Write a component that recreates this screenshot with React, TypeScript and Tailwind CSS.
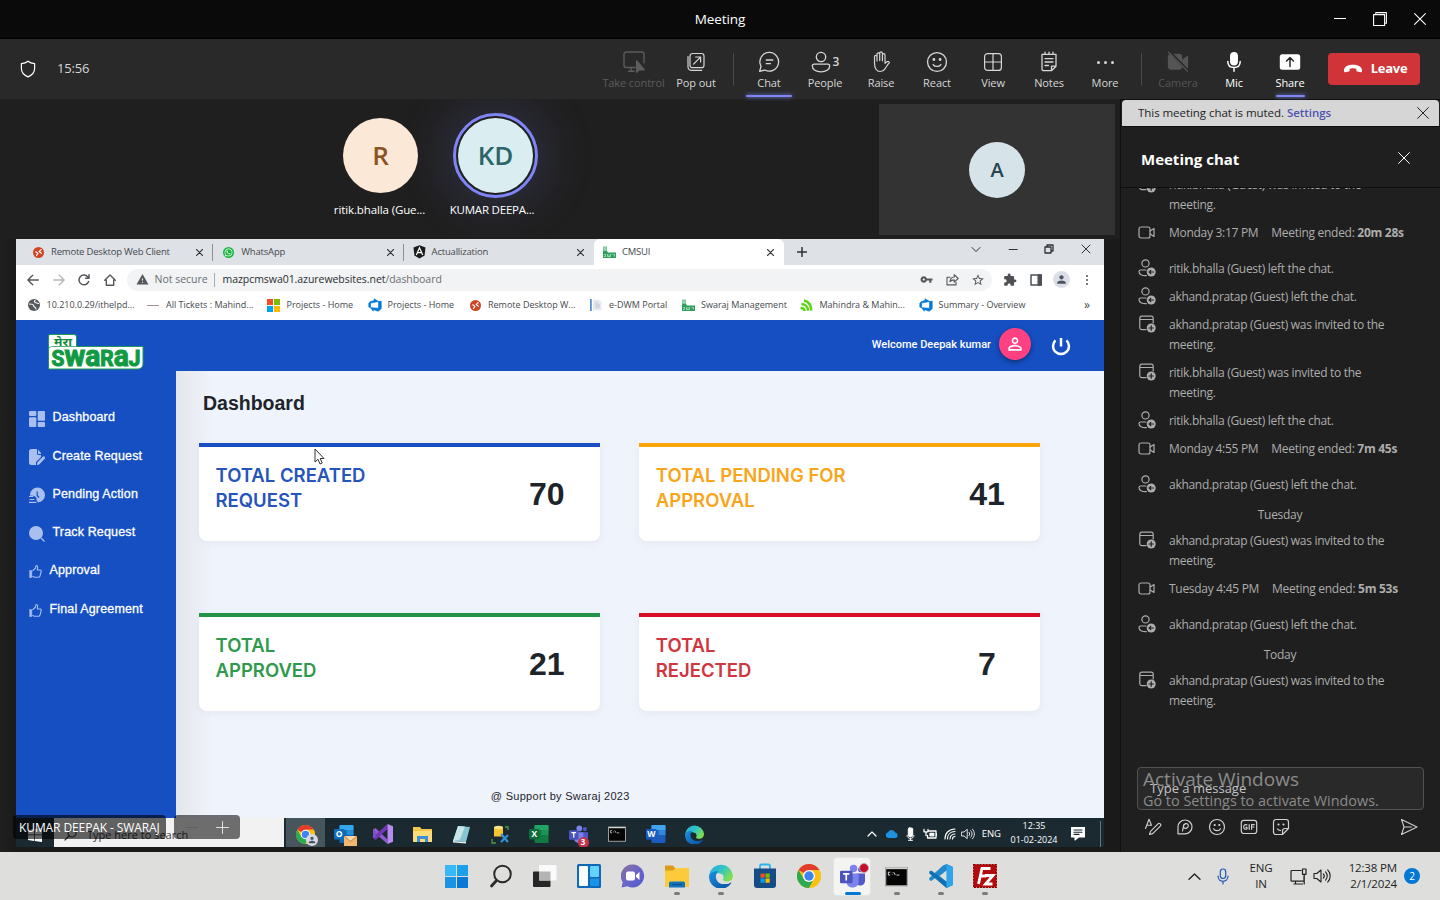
import React from "react";
import { MdVpnKey, MdExtension, MdPerson, MdWarning, MdPersonOutline, MdStarBorder } from "react-icons/md";
import { FaWhatsapp } from "react-icons/fa";

type SvgProps = {
  w?: number;
  h?: number;
  vb?: string;
  sw?: number;
  className?: string;
  children: React.ReactNode;
};

function Svg({ w = 20, h, vb = "0 0 20 20", sw = 1.2, className = "", children }: SvgProps) {
  return (
    <svg width={w} height={h ?? w} viewBox={vb} fill="none" stroke="currentColor" strokeWidth={sw} strokeLinecap="round" strokeLinejoin="round" className={"block shrink-0 " + className}>
      {children}
    </svg>
  );
}

const Close = ({ w = 12, sw = 1.1 }: { w?: number; sw?: number }) => (
  <Svg w={w} vb="0 0 12 12" sw={sw}>
    <path d="M.6.6l10.8 10.8M11.4.6L.6 11.4" />
  </Svg>
);

/* ---------- Window title ---------- */

function TitleBar() {
  return (
    <div className="flex h-[39px] shrink-0 items-center border-b border-black bg-[#0a0a0a] text-white">
      <div className="w-[240px]" />
      <div className="flex-1 text-center text-[13.500px] tracking-[-0.1px]">Meeting</div>
      <div className="flex w-[240px] items-center justify-end gap-[27px] pr-[14px]">
        <Svg w={12} vb="0 0 12 12" sw={1}>
          <path d="M0 5.500h12" />
        </Svg>
        <Svg w={14} vb="0 0 14 14" sw={1.100}>
          <path d="M.6 2.600h11v11H.6zM2.800 2.400V.6h10.600v10.600h-1.600" />
        </Svg>
        <Close />
      </div>
    </div>
  );
}

/* ---------- Meeting toolbar ---------- */

type ToolProps = { label: string; icon: React.ReactNode; className: string; underline?: string };

function Tool({ label, icon, className, underline }: ToolProps) {
  return (
    <div className={"relative flex h-[60px] shrink-0 flex-col items-center " + className}>
      <div className="mt-3 flex h-[22px] items-center justify-center">{icon}</div>
      <div className="mt-[2px] whitespace-nowrap text-[11px] font-medium leading-4 tracking-[-0.1px]">{label}</div>
      {underline && <div className={"absolute bottom-[2px] h-[2px] rounded-full bg-[#7f85f5] shadow-[0_0_4px_#7f85f5] " + underline} />}
    </div>
  );
}

const VSep = ({ className }: { className: string }) => (
  <div className={"flex shrink-0 justify-center " + className}>
    <div className="h-8 w-px bg-[#4a4a4a]" />
  </div>
);

function Toolbar() {
  return (
    <div className="flex h-[60px] shrink-0 items-center bg-[#292929] text-[#d6d6d6]">
      <div className="flex w-[601px] items-center pl-[20px]">
        <Svg w={16} h={18} vb="0 0 16 18" sw={1.200} className="text-white">
          <path d="M8 1.200c1.800 1.500 4 2.200 6.600 2.400v5c0 3.800-2.300 6.600-6.600 8.300C3.700 15.200 1.400 12.400 1.400 8.600v-5C4 3.400 6.200 2.700 8 1.200z" />
        </Svg>
        <span className="ml-[21px] text-[13px] tracking-[-0.15px]">15:56</span>
      </div>
      <Tool
        label="Take control"
        className="w-[65px] tracking-[-0.2px] text-[#5c5c5c]"
        icon={
          <Svg w={22} vb="0 0 22 22" sw={1.400}>
            <path d="M12 16.500H3.200A2.200 2.200 0 0 1 1 14.300V3.200A2.200 2.200 0 0 1 3.200 1h15.600A2.200 2.200 0 0 1 21 3.200v8.500M5.500 20.300h5.700M8 16.700v3.400" />
            <path d="M13.600 9.800v11.400l2.800-2.500h4.800z" fill="currentColor" />
          </Svg>
        }
      />
      <Tool
        label="Pop out"
        className="w-[60px]"
        icon={
          <Svg>
            <rect x="4" y="1.500" width="14" height="14.200" rx="2.500" />
            <path d="M2 4.500v10.600a3.300 3.300 0 0 0 3.300 3.300h10.400M7.500 12.200l7-7M9.600 5h5v5" />
          </Svg>
        }
      />
      <VSep className="w-[14px]" />
      <Tool
        label="Chat"
        className="ml-px w-14"
        underline="w-[46px]"
        icon={
          <Svg w={22}>
            <path d="M10.300 1.300a8.500 8.500 0 1 1-4.100 16L1.500 18.500l1.300-4.600a8.500 8.500 0 0 1 7.500-12.600zM7.500 8.200h6M7.500 11.500h3.800" />
          </Svg>
        }
      />
      <Tool
        label="People"
        className="w-14"
        icon={
          <div className="flex items-center gap-[2px]">
            <Svg w={20} h={22} vb="0 0 20 22" sw={1.300}>
              <circle cx="10" cy="6" r="4.700" />
              <path d="M3 13.200h14a1.700 1.700 0 0 1 1.700 1.700c0 3.600-3.800 5.900-8.700 5.900s-8.700-2.300-8.700-5.900A1.700 1.700 0 0 1 3 13.200z" />
            </Svg>
            <span className="text-[12px] font-semibold">3</span>
          </div>
        }
      />
      <Tool
        label="Raise"
        className="w-14"
        icon={
          <Svg w={20} h={22} vb="0 0 20 22" sw={1.200}>
            <path d="M3.500 12V5.700c0-1.800 2.500-1.800 2.500 0V10 3.200c0-1.900 2.700-1.900 2.700 0V9.500v-7.200c0-1.900 2.700-1.900 2.700 0V9.800 4c0-1.800 2.600-1.800 2.600 0v8.300l2-1.500c1.300-.9 2.700.2 2.300 1.100-1.800 1.600-3 3.900-4.300 5.900-1.300 2-2.600 2.700-4.700 2.700-3.800 0-5.800-3.200-5.800-8.500z" />
          </Svg>
        }
      />
      <Tool
        label="React"
        className="w-14"
        icon={
          <Svg w={22}>
            <circle cx="10" cy="10" r="8.600" />
            <path d="M6.500 12.300c1.500 2.300 5.500 2.300 7 0" />
            <circle cx="7.200" cy="7.700" r=".7" fill="currentColor" />
            <circle cx="12.800" cy="7.700" r=".7" fill="currentColor" />
          </Svg>
        }
      />
      <Tool
        label="View"
        className="w-14"
        icon={
          <Svg>
            <rect x="1.600" y="1.600" width="16.800" height="16.800" rx="3" />
            <path d="M10 1.600v16.800M1.600 10h16.800" />
          </Svg>
        }
      />
      <Tool
        label="Notes"
        className="w-14"
        icon={
          <Svg w={18} h={22} vb="0 0 18 22" sw={1.300}>
            <path d="M16 3.400H2v14.300a2 2 0 0 0 2 2h7.500L16 15.200zM11.500 19.500v-4.300H16M5 1.200v2M9 1.200v2M13 1.200v2M5 7.600h8M5 11h8M5 14.500h3.500" />
          </Svg>
        }
      />
      <Tool
        label="More"
        className="w-14"
        icon={
          <div className="flex gap-[4px]">
            <i className="size-[3px] rounded-full bg-current" />
            <i className="size-[3px] rounded-full bg-current" />
            <i className="size-[3px] rounded-full bg-current" />
          </div>
        }
      />
      <VSep className="w-[17px]" />
      <Tool
        label="Camera"
        className="w-14 text-[#555555]"
        icon={
          <Svg w={22} vb="0 0 22 22" sw={1.300}>
            <path d="M4 3.500h8a2.500 2.500 0 0 1 2.500 2.500v9.500a2.500 2.500 0 0 1-2.500 2.500H4A2.500 2.500 0 0 1 1.500 15.500V6A2.500 2.500 0 0 1 4 3.500zM16 8.800L20.500 5.500v11L16 13.200z" fill="currentColor" />
            <path d="M2.300.8l18.500 19" stroke="#292929" strokeWidth="3" />
            <path d="M1.500 1.200l18.800 18.800" />
          </Svg>
        }
      />
      <Tool
        label="Mic"
        className="w-14 text-white"
        icon={
          <Svg w={16} h={22} vb="0 0 16 22" sw={1.500}>
            <rect x="4.800" y="1.700" width="6.400" height="12" rx="3.200" fill="currentColor" />
            <path d="M1.800 10.500c0 3.700 2.500 6 6.200 6s6.200-2.300 6.200-6M8 16.600v3.600" />
          </Svg>
        }
      />
      <Tool
        label="Share"
        className="w-14 text-white"
        underline="w-[29px]"
        icon={
          <Svg w={22} h={18} vb="0 0 22 18" sw={1.500}>
            <rect x=".8" y="1.300" width="20.400" height="15.400" rx="2.500" fill="currentColor" stroke="none" />
            <path d="M11 13.500V4.800M7.600 8L11 4.600 14.400 8" stroke="#292929" />
          </Svg>
        }
      />
      <div className="ml-[10px] flex h-8 w-[92px] shrink-0 items-center justify-center gap-[8px] rounded-[4px] bg-[#d13438] pl-[2px] text-white">
        <Svg w={20} h={10} vb="0 0 20 10" sw={1}>
          <path d="M10 .8c4.500 0 8.800 1.700 9 5.200.1 1.800-.3 2.400-1.300 2.300l-3.300-.7c-.8-.2-1-.7-1-1.400V4.800c-2-.7-4.800-.7-6.800 0v1.400c0 .7-.2 1.200-1 1.400l-3.300.7C1.300 8.400.9 7.800 1 6 1.200 2.500 5.500.8 10 .8z" fill="currentColor" stroke="none" />
        </Svg>
        <span className="text-[13px] font-bold tracking-[-0.25px]">Leave</span>
      </div>
    </div>
  );
}

/* ---------- Participants ---------- */

function Roster() {
  return (
    <div className="flex h-[140px] shrink-0 overflow-hidden pt-[5px]">
      <div className="flex flex-1 pl-[325px]">
        <div className="relative z-10 flex w-[111px] flex-col items-center">
          <div className="mt-[14px] flex size-[75px] items-center justify-center rounded-full bg-[#fbe8d6] text-[26px] font-semibold text-[#8a5423]">R</div>
          <div className="mr-[2px] mt-[9px] whitespace-nowrap text-[11.500px] leading-4 tracking-[-0.12px] text-white">ritik.bhalla (Gue...</div>
        </div>
        <div className="flex w-[119px] flex-col items-center">
          <div className="mt-[9px] flex size-[85px] shrink-0 items-center justify-center rounded-full border-[3px] border-[#7f85f5] bg-[#1f1f1f] p-[2px] shadow-[0_0_45px_14px_rgba(100,100,180,0.2)]">
            <div className="flex size-full items-center justify-center rounded-full bg-[#daeef1] text-[26px] font-semibold text-[#2c6469]">KD</div>
          </div>
          <div className="relative mr-[7px] mt-[4px] whitespace-nowrap text-[11.500px] leading-4 tracking-[-0.2px] text-white">KUMAR DEEPA...</div>
        </div>
      </div>
      <div className="mr-[5px] flex h-[131px] w-[236px] items-center justify-center bg-[#333333]">
        <div className="flex size-14 items-center justify-center rounded-full bg-[#d6e3e9] text-[20px] font-semibold text-[#26454f]">A</div>
      </div>
    </div>
  );
}

/* ---------- Shared browser ---------- */

const RemoteIcon = () => (
  <Svg w={11} vb="0 0 12 12" sw={1.300}>
    <circle cx="6" cy="6" r="6" fill="#d04525" stroke="none" />
    <path d="M3 5.300L5.400 7 3.800 9.300M8.900 2.800L6.700 5l2.400 1.700" stroke="#fff" />
  </Svg>
);

const SwarajIcon = () => (
  <svg width="13" height="13" viewBox="0 0 13 13" className="block shrink-0">
    <path d="M0 .5h4v4.500H0z" fill="#7cc79a" />
    <path d="M0 5h4l1 1.500h8V12H0z" fill="#2fa05c" />
    <path d="M1.200 2h2M1.200 3.500h2M1 8.500h1.500v2H1M4.500 8v2.500h3V8M6 8.500v2M9.500 8.500h2v2" stroke="#c5e9d2" strokeWidth=".7" fill="none" />
  </svg>
);

const DevopsIcon = () => (
  <svg width="14" height="14" viewBox="0 0 18 18" className="block shrink-0">
    <path d="M17 4v9.740l-4 3.280-6.200-2.260V17l-3.510-4.590 10.230.8V4.440L17 4zm-3.410.49L7.850 1v2.290L2.580 4.840 1 6.870v4.610l2.260 1V6.570l10.330-2.080z" fill="#0078d7" stroke="#0078d7" strokeWidth=".8" />
  </svg>
);

const AngularIcon = () => (
  <svg width="13" height="14" viewBox="0 0 13 14" className="block shrink-0">
    <path d="M6.500.3l6 2.100-.9 8-5.100 3.200-5.100-3.200-.9-8z" fill="#1b1b1b" />
    <path d="M3.300 10l3.200-7.200L9.700 10M4.700 7.700h3.600" stroke="#fff" strokeWidth="1.200" fill="none" />
  </svg>
);

type TabProps = { icon: React.ReactNode; title: string; active?: boolean; sep?: boolean };

function BrowserTab({ icon, title, active, sep }: TabProps) {
  return (
    <div className={"flex h-[26px] w-[190.300px] shrink-0 items-center pl-[9px] " + (active ? "rounded-t-[6px] bg-white" : "")}>
      <div className="flex w-[13px] justify-center">{icon}</div>
      <span className="ml-[6px] flex-1 whitespace-nowrap text-[9.500px] tracking-[-0.2px] text-[#45494d]">{title}</span>
      <span className="mr-[9px] text-[#303134]">
        <Close w={7} sw={2} />
      </span>
      <div className={"h-[17px] w-px " + (sep ? "bg-[#8c9095]" : "")} />
    </div>
  );
}

function BrowserTop() {
  return (
    <div className="shrink-0 text-[#45494d]">
      <div className="flex h-[26px] bg-[#dee1e6] pl-[7px]">
        <BrowserTab icon={<RemoteIcon />} title="Remote Desktop Web Client" sep />
        <BrowserTab
          icon={
            <div className="flex size-[11px] items-center justify-center rounded-full bg-[#19b73f] text-white">
              <FaWhatsapp size={9} />
            </div>
          }
          title="WhatsApp"
          sep
        />
        <BrowserTab icon={<AngularIcon />} title="Actuallization" />
        <BrowserTab icon={<SwarajIcon />} title="CMSUI" active />
        <div className="flex w-[36px] items-center justify-center text-[#303134]">
          <Svg w={10} vb="0 0 10 10" sw={1.500}>
            <path d="M5 .5v9M.5 5h9" />
          </Svg>
        </div>
        <div className="flex flex-1 justify-end gap-[26.700px] pr-[13px] pt-[5px] text-[#303134]">
          <Svg w={10} vb="0 0 10 10" sw={1}>
            <path d="M1 3.500l4 4 4-4" />
          </Svg>
          <Svg w={10} vb="0 0 10 10" sw={1.200}>
            <path d="M1.200 5.500h8" />
          </Svg>
          <Svg w={10} vb="0 0 10 10" sw={1.300}>
            <path d="M1 3h6v6H1zM3 2.800V1h6v6H7.300" />
          </Svg>
          <Svg w={10} vb="0 0 10 10" sw={1}>
            <path d="M1 1l8 8M9 1L1 9" />
          </Svg>
        </div>
      </div>
      <div className="flex h-[28px] items-center bg-white pl-[11px] pt-[1px]">
        <div className="flex w-[100px] items-center gap-[13.500px] text-[#55595d]">
          <Svg w={12} vb="0 0 12 12" sw={1.400}>
            <path d="M11.300 6H1M5.700 1.200L.9 6l4.800 4.800" />
          </Svg>
          <Svg w={12} vb="0 0 12 12" sw={1.400} className="text-[#b4b7bb]">
            <path d="M.7 6H11M6.300 1.200L11.100 6l-4.800 4.800" />
          </Svg>
          <Svg w={12} vb="0 0 12 12" sw={1.500}>
            <path d="M10.600 7.500A4.900 4.900 0 1 1 9.800 2.900L11 4M11 .8v3.400H7.600" />
          </Svg>
          <Svg w={12} vb="0 0 12 12" sw={1.400}>
            <path d="M.7 6.300L6 1l5.300 5.300M2.300 5.500v5.800h7.400V5.500" />
          </Svg>
        </div>
        <div className="flex h-[22px] w-[865px] items-center rounded-full bg-[#f1f3f4] pl-[8.500px] text-[10.500px]">
          <MdWarning size={13} className="text-[#55595d]" />
          <span className="ml-[6px] w-[59px] whitespace-nowrap text-[#6a6e73]">Not secure</span>
          <div className="h-[14px] w-px bg-[#a8abaf]" />
          <span className="ml-[8px] flex-1 whitespace-nowrap tracking-[-0.05px] text-[#2b2e31]">
            mazpcmswa01.azurewebsites.net<span className="text-[#6a6e73]">/dashboard</span>
          </span>
          <div className="flex items-center gap-[12.500px] pr-[7px] text-[#55595d]">
            <MdVpnKey size={13} />
            <Svg w={13} vb="0 0 13 13" sw={1.100}>
              <path d="M4.200 4.300H1v7.600h9V9.300M3.900 8.700c.4-3 2-4.500 4.300-4.700V1.600l4 3.900-4 3.700V6.900c-2 0-3.200.5-4.300 1.800z" />
            </Svg>
            <MdStarBorder size={14} />
          </div>
        </div>
        <div className="ml-[11px] flex items-center text-[#4d5154]">
          <MdExtension size={14} />
          <Svg w={12} vb="0 0 12 12" sw={1.500} className="ml-[13px]">
            <path d="M1 1h10v10H1z" />
            <path d="M8.200 1h3v10h-3z" fill="currentColor" />
          </Svg>
          <div className="ml-[11px] flex size-[17px] items-center justify-center rounded-full bg-[#dce0e6] text-[#4a5266]">
            <MdPerson size={13} />
          </div>
          <div className="ml-[16px] flex flex-col gap-[2px]">
            <i className="size-[2px] rounded-full bg-current" />
            <i className="size-[2px] rounded-full bg-current" />
            <i className="size-[2px] rounded-full bg-current" />
          </div>
        </div>
      </div>
      <Bookmarks />
    </div>
  );
}

function Bookmarks() {
  const items: { w: string; icon: React.ReactNode; text: string }[] = [
    {
      w: "w-[119.500px]",
      text: "10.210.0.29/ithelpd...",
      icon: (
        <Svg w={12} vb="0 0 12 12" sw={1.100}>
          <circle cx="6" cy="6" r="6" fill="#55595d" stroke="none" />
          <path d="M1.500 5c2 0 4 0 4 1.500S8 8 8 10M7 1.500C5.500 3 7.500 4 10.500 4.500" stroke="#fff" />
        </Svg>
      ),
    },
    { w: "w-[120.500px]", text: "All Tickets : Mahind...", icon: <div className="h-px w-3 bg-[#a88f93]" /> },
    {
      w: "w-[101px]",
      text: "Projects - Home",
      icon: (
        <div className="grid grid-cols-2 gap-px">
          <i className="size-[6px] bg-[#f25022]" />
          <i className="size-[6px] bg-[#7fba00]" />
          <i className="size-[6px] bg-[#00a4ef]" />
          <i className="size-[6px] bg-[#ffb900]" />
        </div>
      ),
    },
    { w: "w-[100.500px]", text: "Projects - Home", icon: <DevopsIcon /> },
    { w: "w-[121px]", text: "Remote Desktop W...", icon: <RemoteIcon /> },
    {
      w: "w-[92px]",
      text: "e-DWM Portal",
      icon: (
        <svg width="12" height="12" viewBox="0 0 12 12">
          <path d="M0 0h1.800v12H0z" fill="#5b8fd0" />
          <path d="M3 .8h6l2.500 2.500v8H3z" fill="#e6eaf0" />
          <path d="M5 4h3M5 6h5M5 8h5" stroke="#b3bdc9" strokeWidth=".8" />
        </svg>
      ),
    },
    { w: "w-[118.500px]", text: "Swaraj Management", icon: <SwarajIcon /> },
    {
      w: "w-[119px]",
      text: "Mahindra & Mahin...",
      icon: (
        <Svg w={13} vb="0 0 13 13" sw={2.500} className="text-[#5fd415]">
          <path d="M4 1.500c4.500.8 7 4.500 7.300 10M1.500 5c3.500.2 6.500 2.500 6.500 6.800M.5 9c2 0 4 1 4 3" strokeLinecap="butt" />
        </Svg>
      ),
    },
    { w: "w-[120px]", text: "Summary - Overview", icon: <DevopsIcon /> },
  ];
  return (
    <div className="flex h-[27px] items-center bg-white pb-[3px] pl-[11px]">
      {items.map((b, i) => (
        <div key={i} className={"flex shrink-0 items-center " + b.w}>
          <div className="flex w-[13px] items-center justify-center">{b.icon}</div>
          <span className="ml-[6.500px] whitespace-nowrap text-[9px]">{b.text}</span>
        </div>
      ))}
      <span className="ml-auto mr-[14px] text-[12px] leading-none">»</span>
    </div>
  );
}

/* ---------- CMS page ---------- */

function Logo() {
  return (
    <svg width="98" height="38" viewBox="0 0 98 38" className="block">
      <path d="M3 1.500h24a2.500 2.500 0 0 1 2.500 2.500v9.500H96V31a5 5 0 0 1-5 5H1.500V3A1.500 1.500 0 0 1 3 1.500z" fill="#fff" stroke="#1c9a55" strokeWidth="1" />
      <path d="M1.500 17c0-2 1-3 3-3.500h25" fill="none" stroke="#2ba35c" strokeWidth=".8" />
      <text x="7" y="12.500" fontSize="11" fontWeight="700" fill="#128a3c" textLength="18" lengthAdjust="spacingAndGlyphs" fontFamily="'Noto Sans','Noto Sans Devanagari',sans-serif">
        मेरा
      </text>
      <text x="4.500" y="32.500" fontSize="21.500" fontWeight="700" fill="#119a43" stroke="#119a43" strokeWidth="1.100" textLength="89" lengthAdjust="spacingAndGlyphs" fontFamily="Roboto,'Liberation Sans',sans-serif">
        S<tspan fontSize="29">wa</tspan>R<tspan fontSize="29">a</tspan>J
      </text>
    </svg>
  );
}

const ThumbIcon = () => (
  <Svg w={13} vb="0 0 13 13" sw={1.100}>
    <path d="M3.800 5.700L6.500 3l.4-2c.3-.7 1.800-.5 1.800 1L8.300 5h3c.8 0 1.100.7.9 1.400L11 11c-.3.900-.8 1.300-1.700 1.300H5.500L3.800 11.500" />
    <path d="M.6 5.500h2.200v7H.6z" fill="currentColor" strokeWidth=".5" />
  </Svg>
);

const navItems: { label: string; small?: boolean; icon: React.ReactNode }[] = [
  {
    label: "Dashboard",
    icon: (
      <svg width="16" height="16" viewBox="0 0 16 16" fill="currentColor">
        <rect width="7.300" height="5" rx="1" />
        <rect y="6.300" width="7.300" height="9.700" rx="1" />
        <rect x="8.700" width="7.300" height="9.700" rx="1" />
        <rect x="8.700" y="11" width="7.300" height="5" rx="1" />
      </svg>
    ),
  },
  {
    label: "Create Request",
    icon: (
      <svg width="16" height="16" viewBox="0 0 16 16" fill="currentColor">
        <path d="M2.500 0H8v4.500A1.500 1.500 0 0 0 9.500 6H12v2L7 13v3H2.500A2.500 2.500 0 0 1 0 13.500v-11A2.500 2.500 0 0 1 2.500 0zM9 .5L12 4v1H9.500A.5.5 0 0 1 9 4.500z" />
        <path d="M13.700 7.800a1.400 1.400 0 0 1 2 2L10.200 15.500 7.900 16l.4-2.500z" />
      </svg>
    ),
  },
  {
    label: "Pending Action",
    icon: (
      <svg width="16" height="16" viewBox="0 0 16 16" fill="currentColor">
        <path d="M1 7.500A7.500 7.500 0 1 1 9 15.500L7.500 13V11L5.500 9 1 8.500z" />
        <path d="M8.200 4.500v4l1.800 2" stroke="#154fc2" strokeWidth="1.200" fill="none" />
        <path d="M0 9.500h4.500M.5 12.500h5M0 15.300h7.500" stroke="currentColor" strokeWidth="1.200" />
      </svg>
    ),
  },
  {
    label: "Track Request",
    icon: (
      <svg width="16" height="16" viewBox="0 0 16 16">
        <circle cx="7" cy="7" r="7" fill="currentColor" />
        <path d="M12 12l3.500 3.500" stroke="currentColor" strokeWidth="1.300" />
      </svg>
    ),
  },
  { label: "Approval", small: true, icon: <ThumbIcon /> },
  { label: "Final Agreement", small: true, icon: <ThumbIcon /> },
];

function Sidebar() {
  return (
    <div className="w-[159.500px] shrink-0 bg-[#154fc2]">
      <div className="pl-[31px] pt-[13px]">
        <Logo />
      </div>
      <nav className="mt-[27.500px] flex flex-col">
        {navItems.map((n) => (
          <div key={n.label} className="flex h-[38.300px] items-center pl-[12.500px] text-white">
            <span className={"mt-[2px] text-[#a9c0ee] " + (n.small ? "w-[13px]" : "w-4")}>{n.icon}</span>
            <span className="ml-[8px] whitespace-nowrap font-['Liberation_Sans',Arial,sans-serif] text-[12.500px] tracking-[0.15px] [-webkit-text-stroke:0.3px_currentColor]">{n.label}</span>
          </div>
        ))}
      </nav>
    </div>
  );
}

type CardProps = { l1: string; l2: string; value: string; bar: string; color: string };

function StatCard({ l1, l2, value, bar, color }: CardProps) {
  return (
    <div className={"flex h-[98px] items-center justify-between rounded-b-[8px] border-t-4 bg-white pb-[12px] pl-[16.500px] shadow-[0_2px_6px_rgba(200,205,220,0.25)] " + bar}>
      <div className={"font-['Inter',sans-serif] text-[18.500px] font-semibold leading-[24.500px] " + color}>
        {l1}
        <br />
        {l2}
      </div>
      <div className="mt-[12px] w-[106px] text-center font-['Liberation_Sans',Arial,sans-serif] text-[32px] font-bold leading-none text-[#1d252b]">{value}</div>
    </div>
  );
}

function CmsPage() {
  return (
    <div className="relative flex min-h-0 flex-1">
      <Sidebar />
      <div className="flex flex-1 flex-col">
        <header className="flex h-[51px] shrink-0 items-center justify-end bg-[#154fc2] pr-[31px] text-white">
          <span className="font-['Roboto',sans-serif] text-[11px] font-medium">Welcome Deepak kumar</span>
          <span className="ml-[8px] mt-[-3px] flex size-8 items-center justify-center rounded-full bg-[#ff4081] shadow-[0_2px_5px_rgba(0,0,0,0.4)]">
            <MdPersonOutline size={20} />
          </span>
          <Svg w={24} vb="0 0 24 24" sw={2.500} className="ml-[18px]">
            <path d="M12 4v8.500M17.500 6.300a8 8 0 1 1-11 0" strokeLinecap="butt" />
          </Svg>
        </header>
        <main className="flex flex-1 flex-col bg-[linear-gradient(90deg,#e4e6ec_0,#eff3fb_36px)]">
          <h1 className="ml-[27.500px] mt-[19.500px] font-['Liberation_Sans',Arial,sans-serif] text-[19.500px] font-bold leading-6 text-[#1d252b]">Dashboard</h1>
          <div className="ml-[23.500px] mt-[28px] grid w-[841px] grid-cols-2 gap-x-[39.500px] gap-y-[72px]">
            <StatCard l1="TOTAL CREATED" l2="REQUEST" value="70" bar="border-[#1a4fc4]" color="text-[#2554bd]" />
            <StatCard l1="TOTAL PENDING FOR" l2="APPROVAL" value="41" bar="border-[#fba50a]" color="text-[#f9a51c]" />
            <StatCard l1="TOTAL" l2="APPROVED" value="21" bar="border-[#239447]" color="text-[#2f9a4e]" />
            <StatCard l1="TOTAL" l2="REJECTED" value="7" bar="border-[#d80f28]" color="text-[#d03540]" />
          </div>
          <div className="mt-[77px] pr-[159px] text-center font-['Liberation_Sans',Arial,sans-serif] text-[11px] leading-4 tracking-[0.3px] text-[#1d252b]">@ Support by Swaraj 2023</div>
        </main>
      </div>
      <svg width="12" height="18" viewBox="0 0 12 18" className="absolute left-[298px] top-[128px]">
        <path d="M1 1v13l3-2.700L6 16l2.200-1-2-4.500H10z" fill="#fff" stroke="#333" strokeWidth="1" />
      </svg>
    </div>
  );
}

/* ---------- App icons ---------- */

const ChromeIcon = ({ s }: { s: number }) => (
  <svg width={s} height={s} viewBox="0 0 24 24" className="block">
    <circle cx="12" cy="12" r="12" fill="#fbc116" />
    <path d="M12 12L1.600 6A12 12 0 0 1 22.400 6H12z" fill="#e33b2e" />
    <path d="M1.600 6A12 12 0 0 0 12 24l5.200-9L12 12l-5.200 3z" fill="#2da94f" />
    <path d="M22.400 6H12v6l5.200 3L12 24A12 12 0 0 0 22.400 6z" fill="#fbc116" />
    <circle cx="12" cy="12" r="6" fill="#fff" />
    <circle cx="12" cy="12" r="4.700" fill="#3e83f0" />
  </svg>
);

const EdgeIcon = ({ s, hole }: { s: number; hole: string }) => (
  <svg width={s} height={s} viewBox="0 0 24 24" className="block">
    <defs>
      <linearGradient id="edgeTop" x1="0" y1="0" x2="1" y2=".6">
        <stop offset="0" stopColor="#25a8e4" />
        <stop offset=".5" stopColor="#2fc3c9" />
        <stop offset="1" stopColor="#7fe04b" />
      </linearGradient>
      <linearGradient id="edgeLow" x1="0" y1="0" x2="1" y2="1">
        <stop offset="0" stopColor="#1a8fdf" />
        <stop offset="1" stopColor="#0b4f9e" />
      </linearGradient>
    </defs>
    <path d="M.2 11A12 12 0 0 1 24 11.500c0 3.700-2.600 6-5.600 6-3.400 0-4.900-1.500-4.400-2.500.9-1.300.7-4.300-2.300-5.300C7.500 8.500 2.500 9.500.2 13z" fill="url(#edgeTop)" />
    <path d="M0 13c.3-4 5-6.400 9.500-5.500-4.500 3-3.300 11.500 4.500 12.500 3 .4 5.800-.5 7.300-1.300.8-.3 1 .2.7.8A12 12 0 0 1 0 13z" fill="url(#edgeLow)" />
    <path d="M9.500 11.500c-1.500 3.500.5 8 4.500 8.500 3 .4 5.800-.5 7.300-1.300-6 .8-9.500-2.200-7.300-3.700.9-1.300.6-4.300-1.700-4.800-1.200-.2-2.300.3-2.800 1.300z" fill={hole} />
  </svg>
);

const TeamsIcon = ({ s }: { s: number }) => (
  <svg width={s} height={s} viewBox="0 0 24 24" className="block">
    <circle cx="13" cy="4.300" r="3.600" fill="#7b83eb" />
    <circle cx="20" cy="5.200" r="2.600" fill="#5059c9" />
    <path d="M16 9h8v7.500a4.500 4.500 0 0 1-7.500 3z" fill="#5059c9" />
    <path d="M7 9h11v8a6 6 0 0 1-11.500 2z" fill="#7b83eb" />
    <rect x="0" y="6.500" width="12" height="12" rx="1.200" fill="#4b53bc" />
    <path d="M3 9.500h6M6 9.500v6.300" stroke="#fff" strokeWidth="1.600" />
  </svg>
);

const FolderIcon = ({ s }: { s: number }) => (
  <svg width={s} height={s} viewBox="0 0 24 24" className="block">
    <path d="M0 1.500h8l2 2.500v4H0z" fill="#dd9a14" />
    <path d="M0 6.500h8L10.500 4H24v19H0z" fill="#fcca3b" />
    <path d="M4 23.500V19a1.500 1.500 0 0 1 1.500-1.500h13A1.500 1.500 0 0 1 20 19v4.500z" fill="#1473bd" />
    <path d="M7 20.500h10" stroke="#0b4f8f" strokeWidth="1.300" />
  </svg>
);

const CmdIcon = ({ s }: { s: number }) => (
  <svg width={s} height={s} viewBox="0 0 24 24" className="block">
    <rect x=".7" y="2.700" width="22.600" height="19" fill="#050505" stroke="#a3a3a3" strokeWidth="1.300" />
    <path d="M1 3.500h22" stroke="#d5d5d5" strokeWidth="1.600" />
    <path d="M5.500 7.500h-2v3h2M7.500 8v.5M7.500 10v.5M9 7.500l1.800 3M12 10.500h3" stroke="#e0e0e0" strokeWidth="1" fill="none" />
  </svg>
);

const OfficeIcon = ({ letter, base, light, plate }: { letter: string; base: string; light: string; plate: string }) => (
  <svg width="20" height="20" viewBox="0 0 20 20" className="block">
    <rect x="5.500" y="1" width="14" height="18" rx="1" fill={base} />
    <path d="M5.500 2A1 1 0 0 1 6.500 1h12a1 1 0 0 1 1 1v4h-14z" fill={light} />
    <path d="M12.500 6h7v5h-7z" fill={light} opacity=".6" />
    <rect y="5" width="10.500" height="10.500" rx="1" fill={plate} />
    <text x="5.250" y="13.300" fontSize="8.500" fontWeight="700" fill="#fff" textAnchor="middle" fontFamily="'Open Sans',sans-serif">
      {letter}
    </text>
  </svg>
);

const VsIcon = () => (
  <svg width="20" height="20" viewBox="0 0 20 20" className="block">
    <path d="M0 5.500L2.500 4 14.500 15.500V20L2.500 9.500v5L0 14z" fill="#8f5bd0" />
    <path d="M0 14l2.500 2L14.500 5V0L0 13z" fill="#7038b5" />
    <path d="M0 5.500v8.500l2.500-1V7z" fill="#8450c8" />
    <path d="M14.500 0L20 2.300v15.400L14.500 20z" fill="#b98bee" />
  </svg>
);

const Speaker = ({ s }: { s: number }) => (
  <Svg w={s} vb="0 0 18 16" sw={1.100}>
    <path d="M1 5.500h2.800L8 2v12l-4.200-3.500H1zM10.300 5.800c1.200 1.300 1.200 3.100 0 4.400M12.500 3.800c2.300 2.400 2.300 6 0 8.400M14.700 1.800c3.300 3.500 3.300 8.900 0 12.400" />
  </Svg>
);

/* ---------- Remote taskbar ---------- */

function RemoteTaskbar() {
  const apps: React.ReactNode[] = [
    <div className="relative">
      <ChromeIcon s={19} />
      <div className="absolute bottom-[-2px] right-[-3px] flex size-[12px] items-center justify-center rounded-full bg-[#d5dae1] text-[#4a5266]">
        <MdPerson size={10} />
      </div>
    </div>,
    <div className="relative">
      <OfficeIcon letter="O" base="#1066b5" light="#31a8ea" plate="#0f6cbd" />
      <svg width="13" height="10" viewBox="0 0 13 10" className="absolute bottom-[-2px] right-[-3px]">
        <path d="M0 0h13v10H0z" fill="#f2b76e" />
        <path d="M0 0l6.500 5.500L13 0" fill="#f9d9ab" stroke="#a86f2b" strokeWidth=".8" />
      </svg>
    </div>,
    <VsIcon />,
    <svg width="19" height="17" viewBox="0 0 19 17">
      <path d="M0 1h7l1.500 2H19v13H0z" fill="#f5c64c" />
      <path d="M0 5h19v11H0z" fill="#fddc7c" />
      <path d="M4 16v-6h11v6h-3v-3H7v3z" fill="#3b8fd6" />
    </svg>,
    <svg width="19" height="19" viewBox="0 0 19 19">
      <path d="M6 1l12 1-4 15-13-1z" fill="#86c5d2" />
      <path d="M6 1l7 .5-5 13L1 16z" fill="#c6e6ea" />
      <path d="M1 16l13 1v1.500L1 17.500z" fill="#e8eef0" />
    </svg>,
    <svg width="19" height="19" viewBox="0 0 19 19">
      <path d="M3 2h9v9.500H3z" fill="#f6c530" />
      <ellipse cx="7.500" cy="2.500" rx="4.500" ry="1.800" fill="#fbe389" />
      <path d="M10 9l7 8M17 10l-7 7" stroke="#3293d8" strokeWidth="2.200" />
      <path d="M14 2h3v3M1 14v4h4" stroke="#4f9a45" strokeWidth="1.300" fill="none" />
    </svg>,
    <OfficeIcon letter="X" base="#107c41" light="#21a366" plate="#0f6b39" />,
    <div className="relative">
      <TeamsIcon s={19} />
      <span className="absolute bottom-[-4px] right-[-1px] flex size-[11px] items-center justify-center rounded-full bg-[#c4314b] text-[8px] font-bold text-white">3</span>
    </div>,
    <CmdIcon s={18} />,
    <OfficeIcon letter="W" base="#1b5cbe" light="#41a5ee" plate="#185abd" />,
    <EdgeIcon s={19} hole="#1b2a31" />,
  ];
  return (
    <div className="flex h-[29px] shrink-0 bg-[#1b2a31] text-white">
      <div className="flex w-[38px] items-center justify-center pt-[5px]">
        <svg width="14" height="14" viewBox="0 0 14 14" fill="#fff">
          <path d="M0 2l6-.9v5.500H0zM6.700 1L14 0v6.600H6.700zM0 7.300h6v5.600L0 12zM6.700 7.300H14V14l-7.300-1z" />
        </svg>
      </div>
      <div className="flex w-[230px] items-center bg-[#f2f2f2] pl-[10px] pt-[4px] text-[#3c3c3c]">
        <Svg w={13} vb="0 0 13 13" sw={1.200}>
          <circle cx="8" cy="5" r="4" />
          <path d="M5 8l-4 4" />
        </Svg>
        <span className="ml-[10px] text-[11px] leading-4">Type here to search</span>
      </div>
      <div className="ml-[2px] flex">
        {apps.map((a, i) => (
          <div key={i} className={"flex w-[38.950px] items-center justify-center pt-[3px] " + (i === 0 ? "bg-[#47555c]" : "")}>
            {a}
          </div>
        ))}
      </div>
      <div className="ml-auto flex items-center pt-[2px]">
        <Svg w={10} vb="0 0 10 10" sw={1.200}>
          <path d="M1 7l4-4 4 4" />
        </Svg>
        <svg width="13" height="9" viewBox="0 0 13 9" className="ml-[8px]">
          <path d="M3 9A3 3 0 0 1 3 3.200 4 4 0 0 1 10.200 3.500 2.800 2.800 0 0 1 10.500 9z" fill="#1e90e0" />
        </svg>
        <Svg w={9} h={14} vb="0 0 9 14" sw={1} className="ml-[8px]">
          <rect x="2.300" y="1" width="4.400" height="8.500" rx="1" fill="#fff" />
          <path d="M1 8.500c0 4 7 4 7 0M4.500 11v2.200M2.500 13.300h4" />
        </Svg>
        <Svg w={14} h={12} vb="0 0 14 12" sw={1.300} className="ml-[8px]">
          <path d="M6 3h7v7H4.500V7.500M13.600 5.500v2M1 1.500v2.300h4V1.500M3 4v3.500" />
          <path d="M7 5.500h3.800v2.300H7z" fill="currentColor" />
        </Svg>
        <Svg w={12} vb="0 0 12 12" sw={1.100} className="ml-[7px]">
          <path d="M1 11C1 5 5 1 11 1M3.500 11C3.500 6.500 6.500 3.500 11 3.500M6 11c0-3 2-5 5-5M8.500 11c0-1.500 1-2.500 2.500-2.500" />
        </Svg>
        <span className="ml-[5px]">
          <Speaker s={14} />
        </span>
        <span className="ml-[7px] text-[9.500px] leading-none">ENG</span>
        <div className="ml-[9px] mt-[-2px] w-[48px] whitespace-nowrap text-center text-[9px] leading-[14px]">
          12:35
          <br />
          01-02-2024
        </div>
        <Svg w={14} vb="0 0 14 14" sw={1.100} className="ml-[13px] text-[#1b2a31]">
          <path d="M.5.500h13v9.500H7.500L4 13V10H.5z" fill="#fff" stroke="#fff" />
          <path d="M3 3h8M3 5.200h8M3 7.400h5" />
        </Svg>
        <div className="ml-[15px] mr-[3px] h-[26px] w-px bg-[#69757b]" />
      </div>
    </div>
  );
}

function SharedScreen() {
  return (
    <div className="relative flex flex-1 bg-[linear-gradient(90deg,#1f1f1f_0,#1a1a1a_16px)] pl-4 pr-4">
      <div className="flex h-[608px] w-[1088px] shrink-0 flex-col overflow-hidden">
        <BrowserTop />
        <CmsPage />
        <RemoteTaskbar />
      </div>
      <div className="absolute left-[13px] top-[576px] flex h-6 w-[153px] items-center rounded-[4px] bg-black/60 pl-[6px] pt-px text-[12px] tracking-[-0.1px] whitespace-nowrap text-white">KUMAR DEEPAK - SWARAJ</div>
      <div className="absolute left-[174px] top-[576px] flex h-6 w-[66px] items-center justify-between rounded-[4px] bg-black/55 px-[11px]">
        <Svg w={13} vb="0 0 13 13" sw={1} className="text-[#5e5e5e]">
          <path d="M.5 6.500h12" />
        </Svg>
        <Svg w={13} vb="0 0 13 13" sw={1} className="text-[#e0e0e0]">
          <path d="M.5 6.500h12M6.500.5v12" />
        </Svg>
      </div>
    </div>
  );
}

/* ---------- Meeting chat ---------- */

const LeftIcon = () => (
  <Svg w={18} vb="0 0 18 18" sw={1.200}>
    <circle cx="7.500" cy="4.400" r="3.600" />
    <path d="M8.300 16.700C4 16.900 1 15.300 1 12.500a1.500 1.500 0 0 1 1.500-1.500H8" />
    <circle cx="13.200" cy="13" r="4.500" fill="currentColor" stroke="none" />
    <path d="M15.500 13h-4.300M12.800 11.300L11.100 13l1.700 1.700" stroke="#1f1f1f" />
  </Svg>
);

const InvitedIcon = () => (
  <Svg w={18} vb="0 0 18 18" sw={1.200}>
    <path d="M8 14.700H4a2.200 2.200 0 0 1-2.200-2.200V3.200A2 2 0 0 1 3.800 1.200h9.400a2 2 0 0 1 2 2V8M1.800 4.500h13.400" />
    <circle cx="13.200" cy="13" r="4.500" fill="currentColor" stroke="none" />
    <path d="M13.200 10.800v4.400M11 13h4.400" stroke="#1f1f1f" />
  </Svg>
);

const VideoIcon = () => (
  <Svg w={18} vb="0 0 18 18" sw={1.200}>
    <rect x="1" y="4" width="11" height="11" rx="2" />
    <path d="M12.200 8L16 5.500v8L12.200 11" />
  </Svg>
);

type Entry =
  | { kind: "left"; who: string }
  | { kind: "invited"; who: string }
  | { kind: "ended"; when: string; dur: string }
  | { kind: "date"; label: string };

const entries: Entry[] = [
  { kind: "invited", who: "ritik.bhalla" },
  { kind: "ended", when: "Monday 3:17 PM", dur: "20m 28s" },
  { kind: "left", who: "ritik.bhalla" },
  { kind: "left", who: "akhand.pratap" },
  { kind: "invited", who: "akhand.pratap" },
  { kind: "invited", who: "ritik.bhalla" },
  { kind: "left", who: "ritik.bhalla" },
  { kind: "ended", when: "Monday 4:55 PM", dur: "7m 45s" },
  { kind: "left", who: "akhand.pratap" },
  { kind: "date", label: "Tuesday" },
  { kind: "invited", who: "akhand.pratap" },
  { kind: "ended", when: "Tuesday 4:45 PM", dur: "5m 53s" },
  { kind: "left", who: "akhand.pratap" },
  { kind: "date", label: "Today" },
  { kind: "invited", who: "akhand.pratap" },
];

function ChatEntry({ e }: { e: Entry }) {
  if (e.kind === "date") return <div className="pb-[6px] pt-[2px] text-center">{e.label}</div>;
  if (e.kind === "ended")
    return (
      <div className="flex pb-4 pl-[17px]">
        <VideoIcon />
        <span className="ml-[13px] whitespace-nowrap">
          {e.when}
          <span className="ml-[13px]">
            Meeting ended: <b className="font-bold">{e.dur}</b>
          </span>
        </span>
      </div>
    );
  return (
    <div className="flex pb-2 pl-[17px]">
      {e.kind === "left" ? <LeftIcon /> : <InvitedIcon />}
      <span className="ml-[13px] w-[230px]">
        {e.who} (Guest) {e.kind === "left" ? "left the chat." : <>was invited to the<br />meeting.</>}
      </span>
    </div>
  );
}

function ChatPanel() {
  return (
    <aside className="flex w-[320px] flex-col border-l border-t border-[#0f0f0f] bg-[#1f1f1f]">
      <div className="ml-px mr-px flex h-[26px] shrink-0 items-center justify-between rounded-t-[4px] bg-[#d6d6d6] pl-4 pr-[10px] text-[11.500px] tracking-[-0.05px] text-[#242424]">
        <span>
          This meeting chat is muted. <span className="font-semibold text-[#4f52b2]">Settings</span>
        </span>
        <Close w={12} sw={1} />
      </div>
      <div className="flex h-[62px] shrink-0 items-center justify-between border-b border-t border-[#0f0f0f] pl-[20px] pr-[30px] text-white">
        <h2 className="mt-[4px] text-[15px] font-bold">Meeting chat</h2>
        <span className="mt-[2px]">
          <Close w={12} sw={1} />
        </span>
      </div>
      <div className="h-[579px] shrink-0 overflow-hidden text-[12px] leading-5 tracking-[-0.29px] text-[#adadad]">
        <div className="mt-[-13.500px] w-[318px]">
          {entries.map((e, i) => (
            <ChatEntry key={i} e={e} />
          ))}
        </div>
      </div>
      <div className="relative ml-4 flex h-[43px] w-[287px] shrink-0 items-center rounded-[4px] border border-[#525252] bg-[#292929] pl-3 text-[13px] text-[#c4c4c4]">
        Type a message
        <div className="absolute left-[5px] top-[-2px] whitespace-nowrap text-[#8b8b8b]">
          <div className="text-[19px] leading-[26px]">Activate Windows</div>
          <div className="mt-[-1px] text-[14.400px] leading-[19px]">Go to Settings to activate Windows.</div>
        </div>
      </div>
      <div className="flex items-center pl-[23px] pr-[22px] pt-[8px] text-[#d1d1d1]">
        <div className="flex flex-1 gap-[14px]">
          <Svg w={18} vb="0 0 18 18" sw={1.100}>
            <path d="M1.500 10.500L5 1.300l2.500 6M2.800 7.300h4.400M5.500 16.500l1-3.200 7.500-7.500a1.600 1.600 0 0 1 2.300 2.300l-7.600 7.500z" />
          </Svg>
          <Svg w={18} vb="0 0 18 18" sw={1.200}>
            <path d="M2 15.800V8.900a7 6.900 0 1 1 7 6.900zM6.500 12.800l.9-3.600c-.3-4.500 5.300-4.700 4.900-1.200-.3 2-2.800 3-4.400 1.800" />
          </Svg>
          <Svg w={18} vb="0 0 18 18" sw={1.200}>
            <circle cx="9" cy="9" r="7.500" />
            <path d="M5.500 10.800c1.300 2.500 5.700 2.500 7 0" />
            <circle cx="6.700" cy="7" r=".5" fill="currentColor" />
            <circle cx="11.300" cy="7" r=".5" fill="currentColor" />
          </Svg>
          <Svg w={18} vb="0 0 18 18" sw={1.200}>
            <rect x="1.300" y="2.300" width="15.400" height="13.200" rx="2.500" />
            <path d="M6.900 6.900C5 6 3.700 7.200 3.700 8.900s1.400 3 3.300 2V9.300H5.900M9.200 6.700v4.600M11.600 11.300V6.700h2.600M11.600 9h2.300" />
          </Svg>
          <Svg w={18} vb="0 0 18 18" sw={1.200}>
            <path d="M10.500 16.500H4A2.500 2.500 0 0 1 1.500 14V4A2.500 2.500 0 0 1 4 1.500h10A2.500 2.500 0 0 1 16.500 4v6.500zM10.500 16.300V13a2.500 2.500 0 0 1 2.500-2.500h3.300M5.500 11c.8 1.200 2 1.500 3 1.400" />
            <circle cx="6.500" cy="6.500" r=".5" fill="currentColor" />
            <circle cx="11.500" cy="6.500" r=".5" fill="currentColor" />
          </Svg>
        </div>
        <Svg w={18} vb="0 0 18 18" sw={1.100}>
          <path d="M1.500 1.500l15.500 7.500-15.500 7.500L4 9zM4 9h7.500" />
        </Svg>
      </div>
    </aside>
  );
}

/* ---------- Host taskbar ---------- */

function HostTaskbar() {
  const apps: { icon: React.ReactNode; run?: boolean; active?: boolean }[] = [
    {
      icon: (
        <div className="grid grid-cols-2 gap-px">
          <i className="size-[11px] bg-[#38b8f5]" />
          <i className="size-[11px] bg-[#1ba0ea]" />
          <i className="size-[11px] bg-[#1b93e2]" />
          <i className="size-[11px] bg-[#0a78d4]" />
        </div>
      ),
    },
    {
      icon: (
        <Svg w={24} vb="0 0 24 24" sw={2} className="text-[#2b2b2b]">
          <circle cx="13.500" cy="10" r="8.300" />
          <path d="M7.500 16.500L2.500 22" strokeWidth="2.800" />
        </Svg>
      ),
    },
    {
      icon: (
        <svg width="24" height="24" viewBox="0 0 24 24">
          <rect x="0" y="7.500" width="17.500" height="15.500" rx="1" fill="#262626" />
          <rect x="6" y="1" width="17.500" height="15.500" rx="1" fill="#fafafa" />
          <path d="M6 7.500h11.500v9H6z" fill="#b4b4b4" />
        </svg>
      ),
    },
    {
      icon: (
        <svg width="24" height="24" viewBox="0 0 24 24">
          <rect width="24" height="24" rx="1.500" fill="#1068b8" />
          <rect x="2" y="2" width="9" height="20" rx="1" fill="#f7fbff" />
          <rect x="13" y="2" width="9" height="11" rx="1" fill="#62d3fb" />
          <rect x="13" y="14.500" width="9" height="7.500" rx="1" fill="#1a94e6" />
        </svg>
      ),
    },
    {
      icon: (
        <svg width="24" height="24" viewBox="0 0 24 24">
          <defs>
            <linearGradient id="chatBubble" x1="0" y1="0" x2="1" y2="1">
              <stop offset="0" stopColor="#8f6f94" />
              <stop offset=".5" stopColor="#6a67c8" />
              <stop offset="1" stopColor="#5256d0" />
            </linearGradient>
          </defs>
          <path d="M12 .5A11.500 11.500 0 1 1 6.500 22.300L.5 23.500l1.200-5.300A11.500 11.500 0 0 1 12 .5z" fill="url(#chatBubble)" />
          <rect x="5" y="7.500" width="9" height="9" rx="2" fill="#fff" />
          <path d="M15 11l3.500-3v8L15 13z" fill="#fff" />
        </svg>
      ),
    },
    { icon: <FolderIcon s={24} />, run: true },
    { icon: <EdgeIcon s={24} hole="#dededc" />, run: true },
    {
      icon: (
        <svg width="24" height="26" viewBox="0 -1 24 26">
          <path d="M7 6V2A1.500 1.500 0 0 1 8.500.5h7A1.500 1.500 0 0 1 17 2v4" fill="none" stroke="#2bb3f0" strokeWidth="1.800" />
          <path d="M1 4.500h22V21a3 3 0 0 1-3 3H4a3 3 0 0 1-3-3z" fill="#174b85" />
          <path d="M7.500 9.500h4.200v4.200H7.500z" fill="#f25022" />
          <path d="M12.500 9.500h4.200v4.200h-4.200z" fill="#7fba00" />
          <path d="M7.500 14.500h4.200v4.200H7.500z" fill="#00a4ef" />
          <path d="M12.500 14.500h4.200v4.200h-4.200z" fill="#ffb900" />
        </svg>
      ),
    },
    { icon: <ChromeIcon s={24} /> },
    {
      icon: (
        <div className="relative">
          <TeamsIcon s={25} />
          <span className="absolute right-[-4px] top-[-1px] size-[10px] rounded-full border border-[#c8a0a8] bg-[#c50f2f]" />
        </div>
      ),
      active: true,
    },
    { icon: <CmdIcon s={23} />, run: true },
    {
      icon: (
        <svg width="24" height="24" viewBox="0 0 24 24">
          <path d="M17.500 0L24 3v18l-6.500 3L6.500 13.800 2.300 17 .3 16V14L14 1.500z" fill="#2489ca" />
          <path d="M17.500 24L.3 9.500v-2l2-1L17.500 18z" fill="#1070b3" />
          <path d="M17.500 0L24 3v18l-6.500 3z" fill="#2ea4ec" />
          <path d="M17.500 6.500v11L10.500 12z" fill="#dededc" />
        </svg>
      ),
      run: true,
    },
    {
      icon: (
        <svg width="24" height="24" viewBox="0 0 24 24">
          <rect x=".6" y=".6" width="22.800" height="22.800" fill="#b30b0b" stroke="#8b0000" strokeWidth="1.200" strokeDasharray="2 1" />
          <path d="M5.500 20L9 4.500h8.500M7.300 12h6M12 11.500h8L12.500 20h7" stroke="#fff" strokeWidth="2.800" fill="none" />
        </svg>
      ),
      run: true,
    },
  ];
  return (
    <div className="flex h-12 shrink-0 items-center bg-[#dededc] pl-[434.500px] text-[#1f1f1f]">
      {apps.map((a, i) => (
        <div key={i} className="relative flex h-12 w-11 shrink-0 items-center justify-center">
          {a.active && <div className="absolute left-[2px] top-[5px] h-[39px] w-[38px] rounded-[4px] border border-[#e4e4e2] bg-[#f4f4f3]" />}
          <div className="relative">{a.icon}</div>
          {a.run && <div className="absolute bottom-[5px] h-[3px] w-[6px] rounded-full bg-[#7b7b7b]" />}
          {a.active && <div className="absolute bottom-[5px] h-[3px] w-[16px] rounded-full bg-[#0078d4]" />}
        </div>
      ))}
      <div className="ml-auto flex items-center">
        <Svg w={13} vb="0 0 13 13" sw={1.300}>
          <path d="M1 9.300L6.500 4 12 9.300" />
        </Svg>
        <Svg w={12} h={17} vb="0 0 12 17" sw={1.200} className="ml-[16px] text-[#2058b0]">
          <rect x="3.300" y="1" width="5.400" height="9.500" rx="2.700" />
          <path d="M1 8c0 7 10 7 10 0M6 13.300v2.700" />
        </Svg>
        <div className="ml-[19px] w-[26px] text-center text-[11.500px] leading-4 tracking-[-0.2px]">
          ENG
          <br />
          IN
        </div>
        <Svg w={17} vb="0 0 17 17" sw={1.200} className="ml-[16px]">
          <path d="M11 2.500H2a1 1 0 0 0-1 1v8.700a1 1 0 0 0 1 1h12V8M5.500 13.300v2.500M4 16h8.500M12.500 1h3.500v5.300h-3.500zM14.200 6.500V16" />
        </Svg>
        <span className="ml-[6px]">
          <Speaker s={18} />
        </span>
        <div className="ml-[17px] w-[49px] whitespace-nowrap text-right text-[11.500px] leading-4 tracking-[-0.15px]">
          <div className="flex justify-end">12:38 PM</div>
          <div>2/1/2024</div>
        </div>
        <div className="ml-[7px] mr-[20px] flex size-4 items-center justify-center rounded-full bg-[#0078d4] text-[10px] text-white">2</div>
      </div>
    </div>
  );
}

export default function App() {
  return (
    <div className="flex h-[900px] w-[1440px] flex-col overflow-hidden bg-[#1f1f1f] font-['Open_Sans','Noto_Sans',sans-serif]">
      <TitleBar />
      <Toolbar />
      <div className="flex h-[753px] shrink-0">
        <div className="flex w-[1120px] shrink-0 flex-col">
          <Roster />
          <SharedScreen />
        </div>
        <ChatPanel />
      </div>
      <HostTaskbar />
    </div>
  );
}
